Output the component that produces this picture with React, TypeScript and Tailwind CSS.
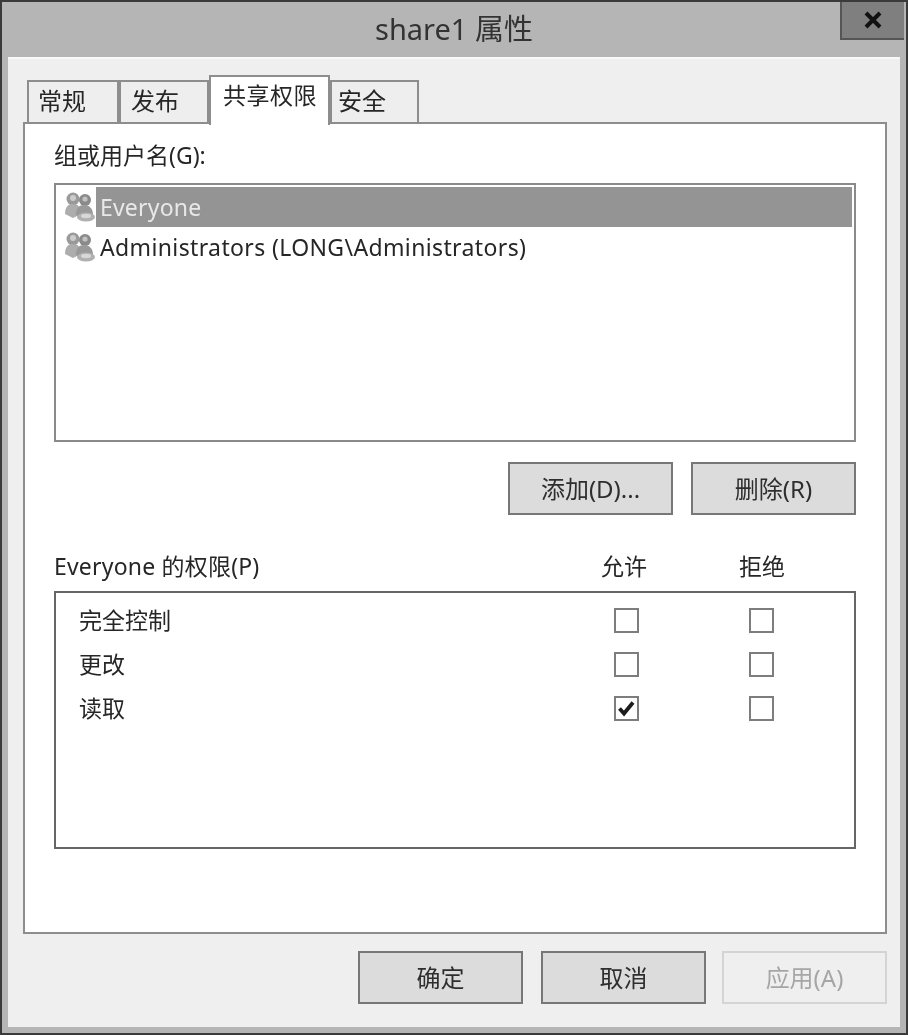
const FONT = "font-['Noto_Sans','Noto_Sans_CJK_SC',sans-serif]";

const TABS = [
  { label: '常规', width: 'w-[92px]', text: 'pl-[9px]' },
  { label: '发布', width: 'w-[90px]', text: 'pl-[10px]' },
  { label: '共享权限', width: 'w-[121px]', text: 'pl-[12px]', active: true },
  { label: '安全', width: 'w-[89px]', text: 'pl-[6px]' },
];

const PERMISSIONS = [
  { label: '完全控制', allow: false },
  { label: '更改', allow: false },
  { label: '读取', allow: true },
];

function UsersIcon() {
  return (
    <svg width="32" height="32" viewBox="0 0 32 32" className="shrink-0">
      <circle cx="9" cy="8" r="6.5" fill="#9a9a9a" />
      <circle cx="9" cy="7" r="3" fill="#cccccc" />
      <path d="M1 23c0-7 3-10 8-10s8 3 8 10l-8 4z" fill="#adadad" />
      <circle cx="21" cy="9" r="6" fill="#8a8a8a" />
      <circle cx="21" cy="8" r="2.6" fill="#c2c2c2" />
      <path d="M12 24c0-7 3-10 8-10s9 3 9 10l-9 4z" fill="#999999" />
      <ellipse cx="22" cy="26" rx="9" ry="4.5" fill="#b0b0b0" />
      <ellipse cx="22" cy="25" rx="5" ry="2.2" fill="#d8d8d8" />
    </svg>
  );
}

function Checkbox({ checked }: { checked?: boolean }) {
  return (
    <div className="flex h-[25px] w-[25px] items-center justify-center border-2 border-[#7d7d7d] bg-white">
      {checked && (
        <svg width="21" height="21" viewBox="0 0 21 21">
          <path d="M3.5 10.5l4.5 5 9-11" fill="none" stroke="#1c1c1c" strokeWidth="3.8" />
        </svg>
      )}
    </div>
  );
}

function DialogButton({ children, disabled }: { children: React.ReactNode; disabled?: boolean }) {
  return (
    <button
      className={
        disabled
          ? 'h-[53px] w-[165px] border-2 border-[#d4d4d4] bg-[#efefef] text-[24px] text-[#a6a6a6]'
          : 'h-[53px] w-[165px] border-2 border-[#777777] bg-[#dcdcdc] text-[24px] text-[#2e2e2e]'
      }
    >
      {children}
    </button>
  );
}

export default function App() {
  return (
    <div className={`${FONT} flex h-[1035px] w-[908px] flex-col border-2 border-[#3a3a3a] bg-[#b5b5b5] text-[#262626] blur-[0.6px]`}>
      {/* Title bar */}
      <div className="relative flex h-[55px] shrink-0 items-center justify-center pb-[2px] text-[29px] text-[#333333]">
        share1 属性
        <div className="absolute right-[2px] top-0 flex h-[38px] w-[64px] items-center justify-center border-b-2 border-l-2 border-[#555555] bg-[#7f7f7f]">
          <svg width="20" height="18" viewBox="0 0 20 18">
            <path d="M3 2l14 14M17 2L3 16" stroke="#111111" strokeWidth="4" />
          </svg>
        </div>
      </div>

      {/* Client area */}
      <div className="mx-[6px] flex h-[970px] flex-col border-t-2 border-[#f8f8f8] bg-[#efefef] px-[15px]">
        {/* Tabs */}
        <div className="relative z-10 ml-[4px] flex h-[63px] shrink-0 items-end">
          {TABS.map((tab) =>
            tab.active ? (
              <div
                key={tab.label}
                className={`${tab.width} ${tab.text} -mb-[3px] h-[50px] shrink-0 border-2 border-b-0 border-[#8d8d8d] bg-white text-[23px] leading-[36px] tracking-[0.5px]`}
              >
                {tab.label}
              </div>
            ) : (
              <div
                key={tab.label}
                className={`${tab.width} ${tab.text} h-[42px] shrink-0 border-2 border-b-0 border-[#8d8d8d] bg-[#eeeeee] text-[24px] leading-[38px]`}
              >
                {tab.label}
              </div>
            )
          )}
        </div>

        {/* Tab page */}
        <div className="flex h-[812px] w-[864px] flex-col border-2 border-[#8d8d8d] bg-white px-[29px]">
          <div className="h-[59px] shrink-0 pt-[13px] text-[23px] leading-[36px]">组或用户名(G):</div>

          {/* Principal list */}
          <div className="flex h-[259px] w-[802px] shrink-0 flex-col border-2 border-[#8a8a8a] pl-[8px] pr-[2px] pt-[2px] text-[23px]">
            <div className="flex h-[40px] items-center">
              <UsersIcon />
              <div className="flex h-full flex-1 items-center bg-[#949494] pl-[4px] tracking-[0.2px] text-[#e8e8e8]">Everyone</div>
            </div>
            <div className="flex h-[40px] items-center">
              <UsersIcon />
              <div className="pl-[4px] tracking-[0.37px]">Administrators (LONG\Administrators)</div>
            </div>
          </div>

          <div className="mt-[20px] flex w-[802px] shrink-0 justify-end gap-[18px]">
            <DialogButton>添加(D)...</DialogButton>
            <DialogButton>删除(R)</DialogButton>
          </div>

          {/* Permissions */}
          <div className="mt-[33px] grid h-[43px] w-[802px] shrink-0 grid-cols-[547px_138px_1fr] text-[23px] leading-[36px]">
            <div className="tracking-[0.2px]">Everyone 的权限(P)</div>
            <div>允许</div>
            <div>拒绝</div>
          </div>
          <div className="flex h-[258px] w-[802px] shrink-0 flex-col gap-[19px] border-2 border-[#666666] pt-[15px]">
            {PERMISSIONS.map((row) => (
              <div key={row.label} className="grid h-[25px] grid-cols-[558px_25px_110px_25px] items-center text-[23px]">
                <div className="pl-[23px] leading-[25px]">{row.label}</div>
                <Checkbox checked={row.allow} />
                <div />
                <Checkbox />
              </div>
            ))}
          </div>
        </div>

        {/* Footer */}
        <div className="mt-[17px] flex w-[864px] justify-end gap-[16px]">
          <div className="flex gap-[18px]">
            <DialogButton>确定</DialogButton>
            <DialogButton>取消</DialogButton>
          </div>
          <DialogButton disabled>应用(A)</DialogButton>
        </div>
      </div>
    </div>
  );
}
